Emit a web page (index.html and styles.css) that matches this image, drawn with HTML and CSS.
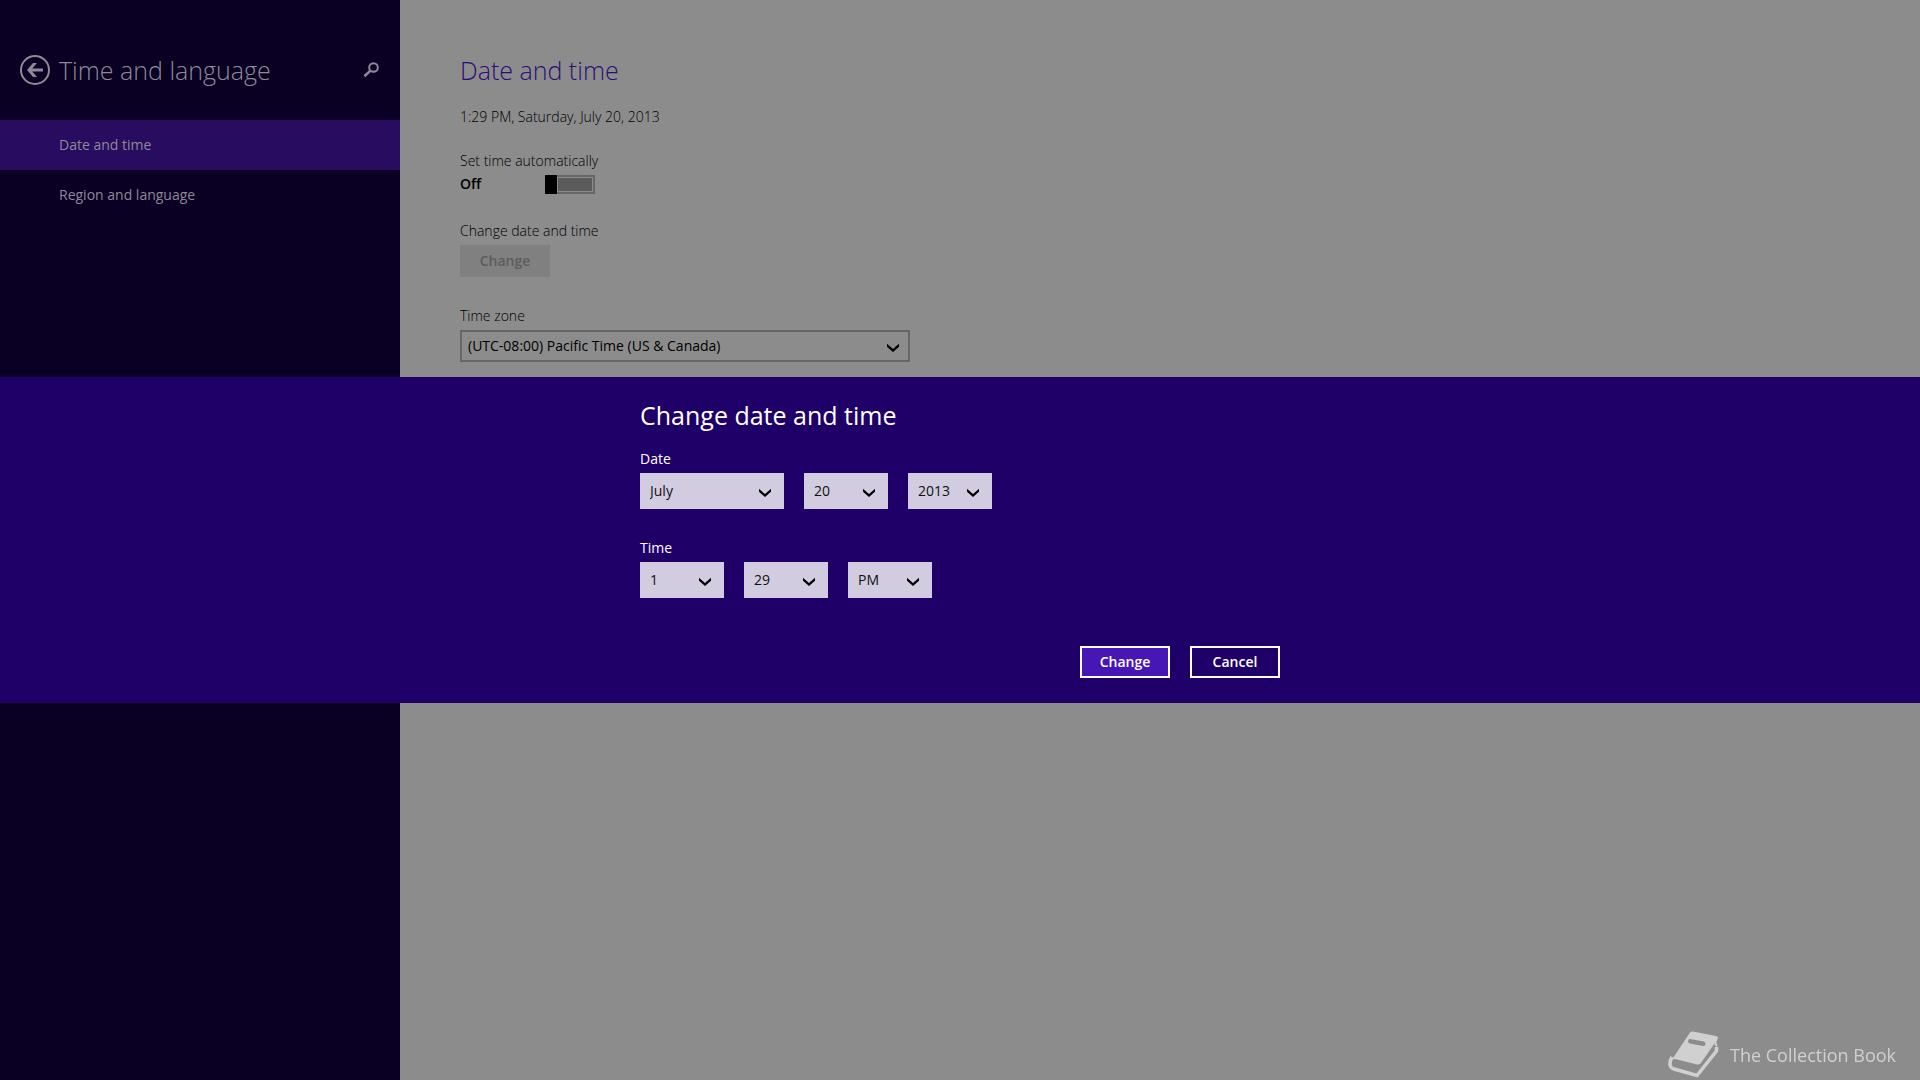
FILE: index.html
```html
<!DOCTYPE html>
<html lang="en">
<head>
<meta charset="utf-8">
<title>Date and time</title>
<link rel="stylesheet" href="styles.css">
</head>
<body>
<svg width="0" height="0" class="defs" aria-hidden="true">
  <symbol id="chevron" viewBox="0 0 14 10"><path d="M1 .8 7 6l6-5.200v3L7 9 1 3.800z"/></symbol>
</svg>
<div class="settings">
  <aside class="sidebar">
    <header class="sidebar-head">
      <button class="icon-button" type="button" aria-label="Back">
        <svg width="30" height="30" viewBox="0 0 30 30"><circle cx="15" cy="15" r="14" fill="none" stroke="currentColor" stroke-width="2"/><path d="M7 15l6-7h4l-4.800 5.500H23v3H12.200L17 22h-4z" fill="currentColor"/></svg>
      </button>
      <h1 class="title">Time and language</h1>
      <button class="icon-button" type="button" aria-label="Search">
        <svg width="16" height="16" viewBox="0 0 16 16" fill="none" stroke="currentColor"><circle cx="10.500" cy="5.500" r="4.300" stroke-width="2"/><path d="M7.400 8.600 1.400 14.200" stroke-width="2.600"/></svg>
      </button>
    </header>
    <nav class="nav">
      <a class="nav-item selected" href="#date">Date and time</a>
      <a class="nav-item" href="#region">Region and language</a>
    </nav>
  </aside>
  <main class="content" id="date">
    <h2 class="title accent">Date and time</h2>
    <p class="now">1:29 PM, Saturday, July 20, 2013</p>
    <section class="group">
      <label for="auto">Set time automatically</label>
      <div class="toggle-row"><span class="state">Off</span><input class="toggle" id="auto" type="checkbox" role="switch"></div>
    </section>
    <section class="group change-group">
      <span>Change date and time</span>
      <button class="button disabled" type="button" disabled>Change</button>
    </section>
    <section class="group zone-group">
      <label for="zone">Time zone</label>
      <div class="select zone">
        <select id="zone"><option>(UTC-08:00) Pacific Time (US &amp; Canada)</option></select>
        <svg class="chevron"><use href="#chevron"/></svg>
      </div>
    </section>
  </main>
</div>

<div class="overlay">
  <form class="dialog" role="dialog" aria-labelledby="dialog-title">
    <div class="dialog-body">
      <h2 class="dialog-title" id="dialog-title">Change date and time</h2>
      <div class="field">
        <label for="month">Date</label>
        <div class="selects">
          <div class="select wide"><select id="month"><option>July</option></select><svg class="chevron"><use href="#chevron"/></svg></div>
          <div class="select"><select aria-label="Day"><option>20</option></select><svg class="chevron"><use href="#chevron"/></svg></div>
          <div class="select"><select aria-label="Year"><option>2013</option></select><svg class="chevron"><use href="#chevron"/></svg></div>
        </div>
      </div>
      <div class="field">
        <label for="hour">Time</label>
        <div class="selects">
          <div class="select"><select id="hour"><option>1</option></select><svg class="chevron"><use href="#chevron"/></svg></div>
          <div class="select"><select aria-label="Minute"><option>29</option></select><svg class="chevron"><use href="#chevron"/></svg></div>
          <div class="select"><select aria-label="AM or PM"><option>PM</option></select><svg class="chevron"><use href="#chevron"/></svg></div>
        </div>
      </div>
      <div class="actions">
        <button class="button primary" type="button">Change</button>
        <button class="button" type="button">Cancel</button>
      </div>
    </div>
  </form>
</div>

<div class="watermark">
  <svg width="52" height="48" viewBox="0 0 52 48">
    <path fill="currentColor" fill-rule="evenodd" d="M22 1.500Q23 .3 25 .6L48 5q3 .6 1.500 3L33 32q-1.500 2-4 1.500L7 28q-2.500-.5-4 2 Q5 27 7 24zM22 8q-2 0-2 2t2 2.500l13 2.500q2.500 0 2.500-2T36 10.500z"/>
    <path fill="none" stroke="currentColor" stroke-width="3.600" stroke-linejoin="round" d="M4 26q-3 5-1.500 9.500Q3 37 6 38l23 6.500L48.500 20v-4"/>
    <path fill="none" stroke="currentColor" stroke-width="2" d="M49 15q-3-3-.5-7"/>
  </svg>
  <span>The Collection Book</span>
</div>
</body>
</html>
```
FILE: styles.css
```css
* { box-sizing: border-box; }

body {
  margin: 0;
  background: #8c8c8c;
  color: #000;
  font: 14px/20px "Open Sans", "Noto Sans", sans-serif;
}

h1, h2, p { margin: 0; }
button, select { font: inherit; color: inherit; border-radius: 0; }
.defs { position: absolute; }

.settings { display: flex; min-height: 100vh; }

.sidebar { flex: 0 0 400px; background: #0a0024; color: #8e8a96; }
.sidebar-head {
  display: flex;
  align-items: center;
  height: 100px;
  padding: 40px 21px 0 20px;
  margin-bottom: 20px;
}
.sidebar-head .title { flex: 1; margin-left: 9px; }
.icon-button { display: flex; padding: 0; border: 0; background: none; }
.title { font-size: 25px; line-height: 40px; font-weight: 300; }
.accent { color: #2c0d78; }

.nav-item {
  display: flex;
  align-items: center;
  height: 50px;
  padding-left: 59px;
  color: inherit;
  text-decoration: none;
}
.nav-item.selected { background: #270c5f; }

.content { flex: 1; padding: 50px 60px; }
.now { margin-top: 17px; margin-bottom: 24px; font-weight: 350; }
.group { display: flex; flex-direction: column; align-items: flex-start; font-weight: 350; }
.toggle-row { display: flex; align-items: center; height: 26px; }
.state { width: 85px; font-weight: 600; }
.toggle {
  appearance: none;
  width: 50px;
  height: 19px;
  margin: 0;
  border: 2px solid #666;
  border-left: 12px solid #000;
  border-image: linear-gradient(90deg, #000 12px, #666 12px) 2 2 2 12;
  background: #5b5b5b content-box;
  padding: 1px;
}
.change-group { margin-top: 24px; gap: 4px; }
.zone-group { margin-top: 29px; gap: 4px; }

.button {
  width: 90px;
  height: 32px;
  padding: 0;
  border: 2px solid #fff;
  background: transparent;
  font-weight: 600;
  line-height: 20px;
}
.button.primary { background: #4617b4; }
.button.disabled { border: 0; background: #808080; color: #5c5c5c; }

.select { display: grid; align-items: center; width: 84px; font-weight: 400; }
.select > * { grid-area: 1 / 1; }
.select select {
  appearance: none;
  width: 100%;
  height: 36px;
  padding: 0 10px;
  border: 0;
  background: #d2cce0;
  color: #101010;
}
.select.wide { width: 144px; }
.select.zone { width: 450px; max-width: 100%; }
.select.zone select {
  height: 32px;
  padding: 0 6px;
  border: 2px solid #666;
  background: transparent;
  color: #000;
}
.chevron {
  justify-self: end;
  width: 14px;
  height: 10px;
  margin: 3px 12px 0 0;
  pointer-events: none;
}
.zone .chevron { margin-right: 10px; }

.overlay { position: fixed; inset: 0; display: flex; align-items: center; }
.dialog { width: 100%; padding: 20px 20px 25px; background: #1f0068; color: #fff; }
.dialog-body { max-width: 640px; margin: 0 auto; }
.dialog-title { font-size: 25px; line-height: 36px; font-weight: 400; }
.field { display: flex; flex-direction: column; gap: 4px; margin-top: 16px; }
.field + .field { margin-top: 29px; }
.selects { display: flex; gap: 20px; }
.actions { display: flex; justify-content: flex-end; gap: 20px; margin-top: 48px; }

.watermark {
  position: fixed;
  right: 24px;
  bottom: 1px;
  display: flex;
  align-items: center;
  gap: 10px;
  color: #d0d0d0;
  font-size: 18px;
  line-height: 24px;
}
```
